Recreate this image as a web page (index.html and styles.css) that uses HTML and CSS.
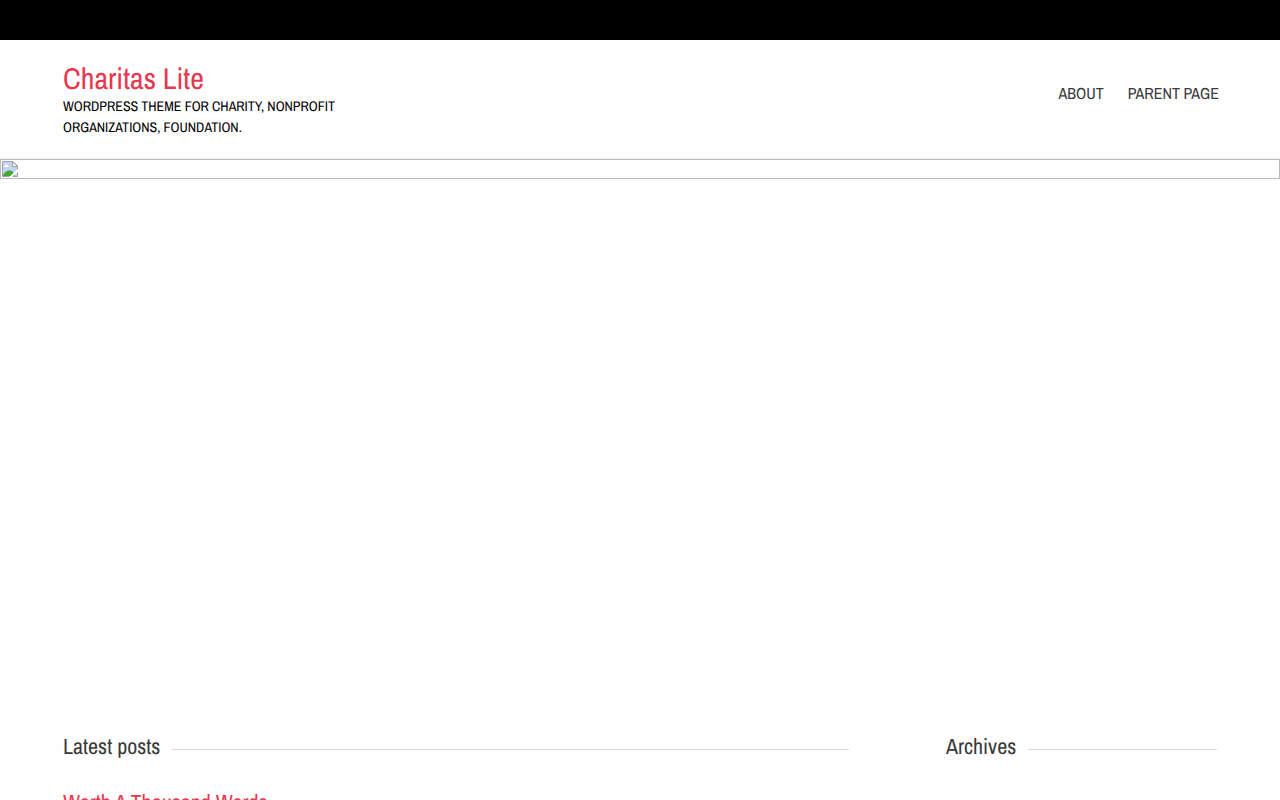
FILE: index.html
```html
<!DOCTYPE html>
<html lang="en">
<head>
  <meta charset="utf-8">
  <title>Charitas Lite</title>
  <link rel="stylesheet" href="styles.css">
</head>
<body>
  <div class="top-bar"></div>
  <header class="header">
    <div class="container header-inner">
      <div class="logo">
        <h1><a href="#">Charitas Lite</a></h1>
        <p>WordPress theme for charity, nonprofit organizations, foundation.</p>
      </div>
      <nav class="main-menu">
        <a href="#">About</a>
        <a href="#">Parent Page</a>
      </nav>
    </div>
  </header>

  <div class="slider">
    <div class="slide">
      <svg class="slide-icon" width="16" height="16" viewBox="0 0 16 16">
        <path d="M0.5 0.5H11L15.5 5V15.5H0.5Z" fill="#c2d5f7" stroke="#a0a0a0"/>
        <path d="M10.5 0.5V5.5H15.5Z" fill="#fff" stroke="#a0a0a0"/>
        <path d="M2 6C2 5 3 4 4 4C5 3 6 4 6 5C7 5 7 6 7 6Z" fill="#fff"/>
        <path d="M1 15V14C3 10 8 8 11 11L13 15Z" fill="#47a62f"/>
        <path d="M7 16L16 8V11L10 16Z" fill="#fff"/>
      </svg>
    </div>
  </div>

  <main class="container content">
    <section class="posts">
      <h2 class="section-title">Latest posts</h2>
      <h3 class="post-title"><a href="#">Worth A Thousand Words</a></h3>
    </section>
    <aside class="sidebar">
      <h2 class="section-title">Archives</h2>
    </aside>
  </main>
</body>
</html>
```

FILE: styles.css
```css
body {
  margin: 0;
  background: #fefefe;
  color: #3a3a3a;
  font-family: "Archivo Narrow", "Liberation Sans Narrow", "Arial Narrow", sans-serif;
  font-size: 16px;
  text-rendering: geometricPrecision;
}

h1, h2, h3, p {
  margin: 0;
  font-weight: normal;
}

a {
  color: #e63950;
  text-decoration: none;
}

.container {
  max-width: 1154px;
  margin: 0 auto;
}

.top-bar {
  height: 40px;
  background: #000;
}

/* Header */
.header {
  border-bottom: 1px solid #f0f0f0;
}

.header-inner {
  display: flex;
  justify-content: space-between;
  padding: 21px 0 19px;
}

.logo {
  width: 280px;
}

.logo h1 {
  font-size: 30px;
  line-height: 36px;
}

.logo p {
  color: #000;
  font-size: 14px;
  line-height: 21px;
  text-transform: uppercase;
}

.main-menu {
  display: flex;
  gap: 24px;
  margin-right: -2px;
  padding-top: 20px;
}

.main-menu a {
  color: #3a3a3a;
  line-height: 24px;
  text-transform: uppercase;
}

/* Slider */
.slider {
  min-height: 560px;
}

.slide {
  height: 18px;
  border: 1px solid #bbb;
}

.slide-icon {
  display: block;
  margin: 1px;
}

/* Content */
.content {
  display: grid;
  grid-template-columns: 786fr 271fr;
  column-gap: 97px;
  padding-top: 11px;
}

.section-title {
  display: flex;
  align-items: center;
  gap: 12px;
  font-size: 22px;
  line-height: 32px;
}

.section-title::after {
  content: "";
  flex: 1;
  margin-top: 6px;
  border-top: 1px solid #d8dbda;
}

.post-title {
  margin-top: 26px;
  font-size: 22px;
  line-height: 28px;
}
```
